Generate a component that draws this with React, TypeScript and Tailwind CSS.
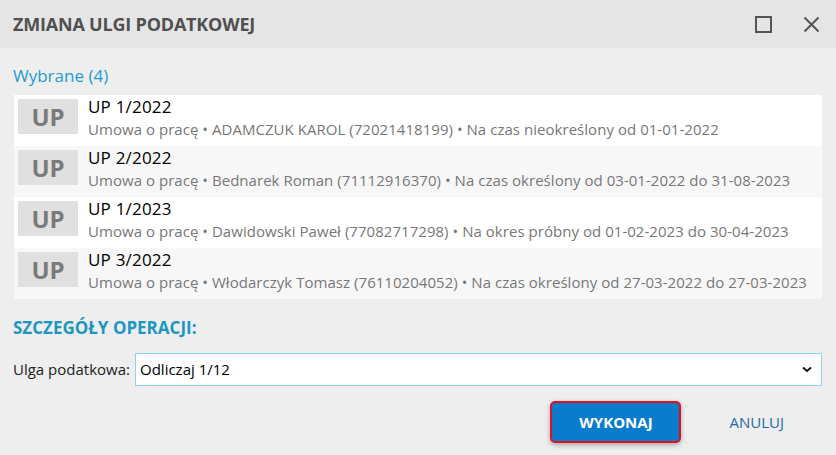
import React from 'react';

const rows = [
  { code: 'UP 1/2022', desc: 'Umowa o pracę • ADAMCZUK KAROL (72021418199) • Na czas nieokreślony od 01-01-2022' },
  { code: 'UP 2/2022', desc: 'Umowa o pracę • Bednarek Roman (71112916370) • Na czas określony od 03-01-2022 do 31-08-2023' },
  { code: 'UP 1/2023', desc: 'Umowa o pracę • Dawidowski Paweł (77082717298) • Na okres próbny od 01-02-2023 do 30-04-2023' },
  { code: 'UP 3/2022', desc: 'Umowa o pracę • Włodarczyk Tomasz (76110204052) • Na czas określony od 27-03-2022 do 27-03-2023' },
];

const App: React.FC = () => {
  return (
    <div className="w-[836px] h-[455px] bg-[#eeeeee] flex flex-col font-['Open_Sans',sans-serif] overflow-hidden">
      {/* Header */}
      <div className="h-[48px] bg-[#e5e5e5] flex items-center pl-[13px] pr-[16px]">
        <h1 className="text-[18px] font-bold text-[#505050] tracking-[-0.2px] flex-1">ZMIANA ULGI PODATKOWEJ</h1>
        <div className="flex items-center gap-[31px]">
          <svg width="17" height="17" viewBox="0 0 17 17">
            <rect x="1" y="1" width="15" height="15" fill="none" stroke="#555" strokeWidth="2" />
          </svg>
          <svg width="17" height="17" viewBox="0 0 17 17">
            <path d="M1.5 1.5 L15.5 15.5 M15.5 1.5 L1.5 15.5" stroke="#555" strokeWidth="2" fill="none" />
          </svg>
        </div>
      </div>

      {/* Body */}
      <div className="flex flex-col px-[14px]">
        <div className="text-[17px] text-[#1e9bd1] mt-[15px] -ml-[1px] leading-[25px]">Wybrane (4)</div>
        <div className="mt-[7px] flex flex-col">
          {rows.map((r, i) => (
            <div
              key={r.code}
              className={`flex items-start h-[51px] pl-[4px] pt-[4px] ${i % 2 === 0 ? 'bg-white' : 'bg-[#f7f7f7]'}`}
            >
              <div className="w-[60px] h-[35px] bg-[#e0e0e0] flex items-center justify-center text-[24px] font-bold text-[#7a7a7a]">
                UP
              </div>
              <div className="ml-[10px] flex flex-col -mt-[3px]">
                <div className="text-[17px] text-black leading-[22px] tracking-[0.2px]">{r.code}</div>
                <div className="text-[15px] text-[#777777] leading-[22px] tracking-[0.04px]">{r.desc}</div>
              </div>
            </div>
          ))}
        </div>

        <div className="mt-[17px] text-[17px] font-bold text-[#1d96c2] -ml-[1px] leading-[24px]">SZCZEGÓŁY OPERACJI:</div>

        <div className="mt-[13px] flex items-center -ml-[1px]">
          <span className="text-[15px] text-[#222] w-[122px]">Ulga podatkowa:</span>
          <div className="w-[687px] h-[33px] bg-white border border-[#8fd0f0] flex items-center pl-[4px] pr-[9px]">
            <span className="text-[15px] text-black flex-1">Odliczaj 1/12</span>
            <svg width="10" height="7" viewBox="0 0 10 7">
              <path d="M1 1.5 L5 5 L9 1.5" stroke="#111" strokeWidth="2" fill="none" />
            </svg>
          </div>
        </div>

        <div className="mt-[15px] flex items-center justify-end pr-[38px]">
          <button className="w-[131px] h-[42px] rounded-[5px] border-2 border-[#e3101f] bg-[#0a7ccd] text-white text-[15px] font-bold shadow-[0_2px_5px_rgba(0,0,0,0.3)]">
            WYKONAJ
          </button>
          <button className="ml-[48px] text-[15px] text-[#1c6aa6]">ANULUJ</button>
        </div>
      </div>
    </div>
  );
};

export default App;
